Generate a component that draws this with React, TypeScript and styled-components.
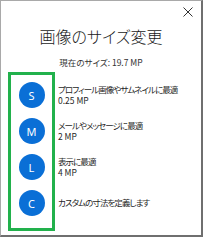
import React from 'react';
import styled, { createGlobalStyle } from 'styled-components';

const GlobalStyle = createGlobalStyle`
  html, body {
    margin: 0;
    padding: 0;
    background: #ffffff;
  }
  body {
    font-family: "Noto Sans CJK JP", "Noto Sans", sans-serif;
    font-feature-settings: "palt";
    color: #1f1f1f;
  }
`;

const Window = styled.div`
  width: 203px;
  height: 237px;
  box-sizing: border-box;
  border-style: solid;
  border-color: #a9a9a9 #6f6f6f #6f6f6f #a9a9a9;
  border-width: 1px 2px 2px 1px;
  background: #ffffff;
  display: flex;
  flex-direction: column;
`;

const TopBar = styled.div`
  height: 25px;
  box-sizing: border-box;
  padding: 6px 8px 0 0;
  display: flex;
  justify-content: flex-end;
`;

const CloseButton = styled.button`
  width: 10px;
  height: 10px;
  padding: 0;
  border: none;
  background: transparent;
  display: flex;
  cursor: pointer;
`;

const Title = styled.h1`
  margin: 0;
  font-size: 16px;
  line-height: 20px;
  font-weight: 300;
  text-align: center;
  color: #1a1a1a;
`;

const Current = styled.div`
  margin-top: 10px;
  font-size: 8.5px;
  line-height: 12px;
  text-align: center;
  color: #333333;
`;

const List = styled.div`
  margin: 4px 0 0 7px;
  display: flex;
  gap: 3px;
`;

const BadgeColumn = styled.div`
  width: 47px;
  box-sizing: border-box;
  border: 3px solid #22b14c;
  padding: 7px 0 12px;
  display: flex;
  flex-direction: column;
  align-items: center;
  gap: 10px;
`;

const Badge = styled.div`
  width: 26px;
  height: 26px;
  border-radius: 50%;
  background: #0a6fd6;
  color: #ffffff;
  font-family: "Noto Sans", sans-serif;
  font-size: 11px;
  display: flex;
  align-items: center;
  justify-content: center;
`;

const TextColumn = styled.div`
  padding-top: 10px;
  display: flex;
  flex-direction: column;
  gap: 10px;
`;

const Option = styled.div`
  height: 26px;
  display: flex;
  flex-direction: column;
  justify-content: center;
  font-size: 8.5px;
  line-height: 11.5px;
  letter-spacing: -0.95px;
  color: #1f1f1f;
  white-space: nowrap;
`;

const Size = styled.span`
  letter-spacing: 0;
`;

const options = [
  { key: 'S', label: 'プロフィール画像やサムネイルに最適', size: '0.25 MP' },
  { key: 'M', label: 'メールやメッセージに最適', size: '2 MP' },
  { key: 'L', label: '表示に最適', size: '4 MP' },
  { key: 'C', label: 'カスタムの寸法を定義します' },
];

export default function App() {
  return (
    <>
      <GlobalStyle />
      <Window>
        <TopBar>
          <CloseButton aria-label="閉じる">
            <svg width="10" height="10" viewBox="0 0 10 10">
              <path d="M0.5 0.5L9.5 9.5M9.5 0.5L0.5 9.5" stroke="#333" strokeWidth="1" />
            </svg>
          </CloseButton>
        </TopBar>
        <Title>画像のサイズ変更</Title>
        <Current>現在のサイズ: 19.7 MP</Current>
        <List>
          <BadgeColumn>
            {options.map((o) => (
              <Badge key={o.key}>{o.key}</Badge>
            ))}
          </BadgeColumn>
          <TextColumn>
            {options.map((o) => (
              <Option key={o.key}>
                <span>{o.label}</span>
                {o.size && <Size>{o.size}</Size>}
              </Option>
            ))}
          </TextColumn>
        </List>
      </Window>
    </>
  );
}
